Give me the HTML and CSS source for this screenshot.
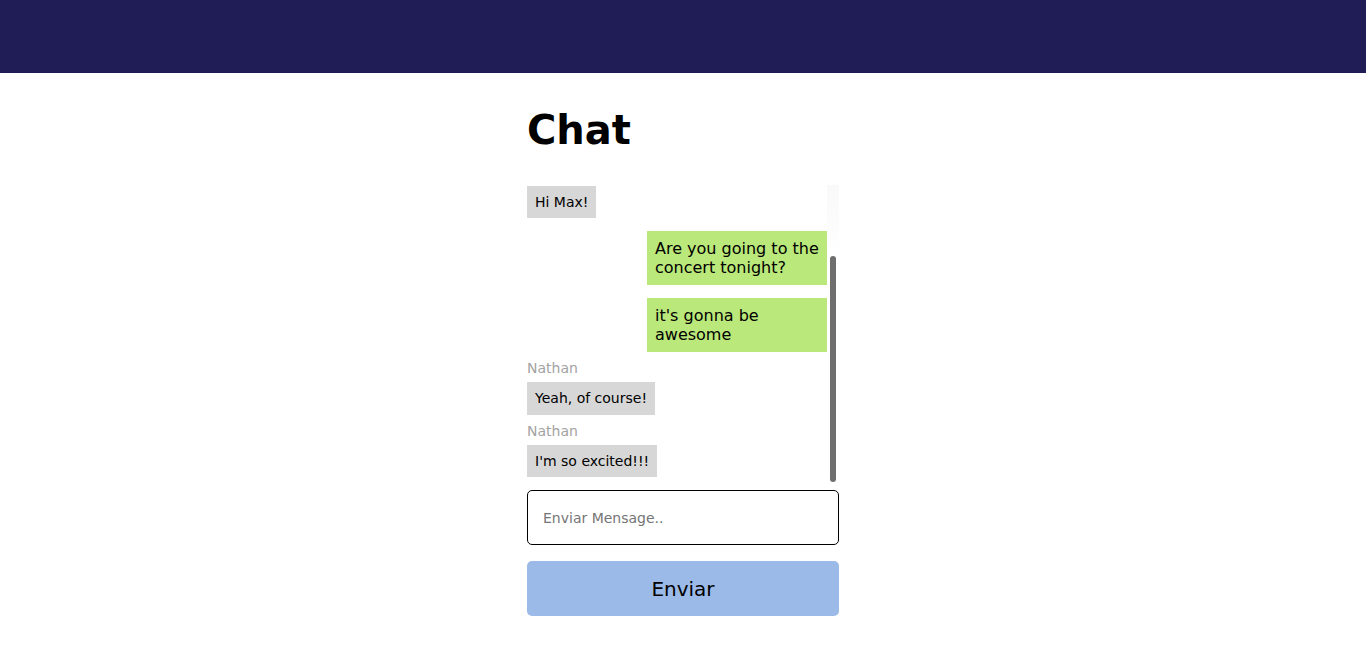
FILE: index.html
```html
<!DOCTYPE html>
<html lang="es">
<head>
<meta charset="utf-8">
<title>Chat</title>
<link rel="stylesheet" href="styles.css">
</head>
<body>
<header class="topbar"></header>
<main class="chat">
  <h1 class="chat-title">Chat</h1>
  <div class="messages-wrap">
    <div class="messages">
      <div class="messages-inner">
        <div class="msg received"><div class="bubble">Hi Max!</div></div>
        <div class="msg sent"><div class="bubble">Are you going to the concert tonight?</div></div>
        <div class="msg sent"><div class="bubble">it's gonna be awesome</div></div>
        <div class="msg received"><div class="sender">Nathan</div><div class="bubble">Yeah, of course!</div></div>
        <div class="msg received"><div class="sender">Nathan</div><div class="bubble">I'm so excited!!!</div></div>
      </div>
    </div>
    <div class="scroll-track"></div>
    <div class="scroll-thumb"></div>
  </div>
  <input class="composer" type="text" placeholder="Enviar Mensage..">
  <button class="send" type="button">Enviar</button>
</main>
</body>
</html>
```
FILE: styles.css
```css
html, body {
  margin: 0;
  padding: 0;
  background: #ffffff;
  font-family: "DejaVu Sans", sans-serif;
  color: #000;
}

.topbar {
  height: 73px;
  background: #201c55;
}

.chat {
  width: 312px;
  margin: 0 auto;
  display: flex;
  flex-direction: column;
}

.chat-title {
  font-size: 40px;
  font-weight: bold;
  line-height: 47px;
  margin: 34px 0 31px;
}

.messages-wrap {
  position: relative;
  height: 300px;
}

.messages {
  height: 300px;
  box-sizing: border-box;
  padding-right: 12px;
  overflow: hidden;
  display: flex;
  flex-direction: column-reverse;
}

.scroll-track {
  position: absolute;
  top: 0;
  right: 0;
  width: 12px;
  height: 300px;
  background: linear-gradient(to bottom, #f9f9f9 0, #fcfcfc 40px, #ffffff 70px);
}

.scroll-thumb {
  position: absolute;
  top: 71px;
  right: 3px;
  width: 6px;
  height: 226px;
  border-radius: 3px;
  background: #6e6e6e;
}

.messages-inner {
  display: flex;
  flex-direction: column;
  flex-shrink: 0;
}

.msg {
  display: flex;
  flex-direction: column;
  align-items: flex-start;
  margin-bottom: 8px;
}

.msg.sent {
  align-items: flex-end;
  margin-top: 5px;
}

.sender {
  font-size: 14px;
  line-height: 16px;
  color: #a3a3a3;
  margin-bottom: 6px;
}

.bubble {
  padding: 8px;
  font-size: 14px;
  line-height: 16.5px;
  background: #d7d7d7;
  color: #000;
}

.sent .bubble {
  width: 60%;
  box-sizing: border-box;
  font-size: 16px;
  line-height: 19px;
  background: #bbe87a;
}

.composer {
  margin-top: 5px;
  height: 55px;
  box-sizing: border-box;
  width: 100%;
  border: 1px solid #000;
  border-radius: 5px;
  padding: 0 15px;
  font-family: "DejaVu Sans", sans-serif;
  font-size: 14px;
  outline: none;
}

.composer::placeholder {
  color: #757575;
}

.send {
  margin-top: 16px;
  height: 55px;
  width: 100%;
  border: none;
  border-radius: 5px;
  background: #9cbae8;
  color: #000;
  font-family: "DejaVu Sans", sans-serif;
  font-size: 20px;
  cursor: pointer;
}
```
